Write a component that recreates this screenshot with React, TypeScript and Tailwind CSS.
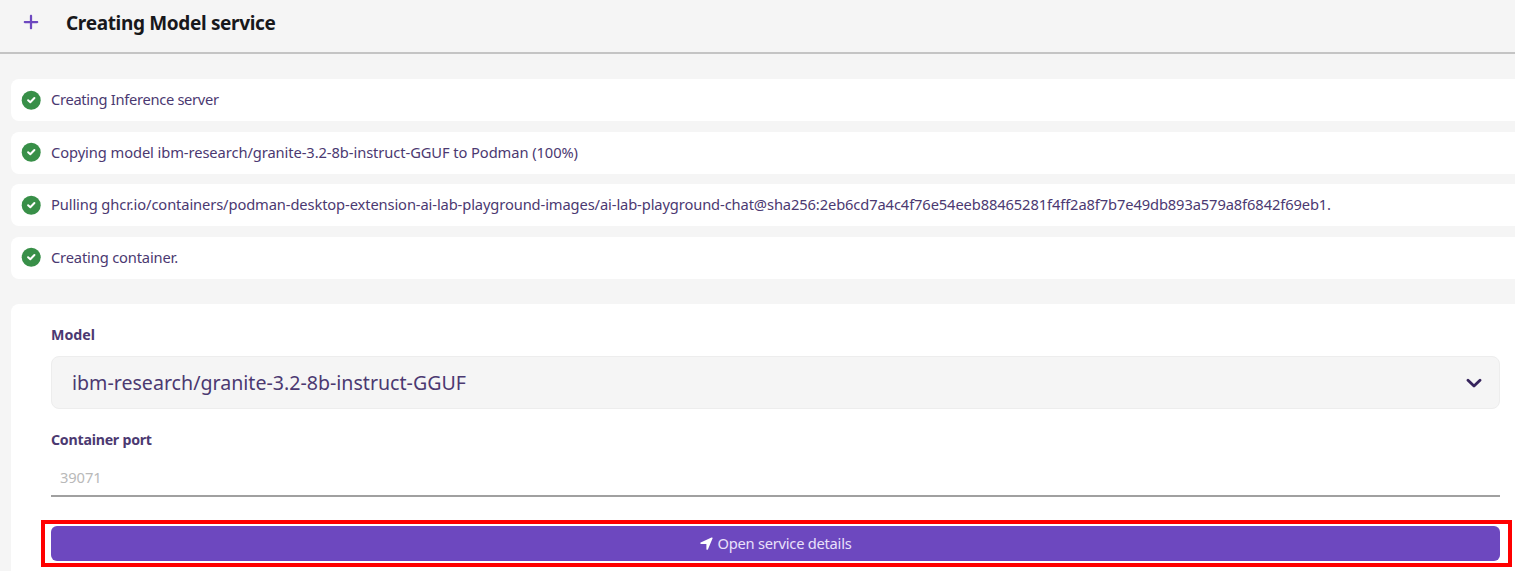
import { FaPlus } from 'react-icons/fa6';

const tasks = [
  { label: 'Creating Inference server', tracking: 'tracking-[-0.31px]' },
  { label: 'Copying model ibm-research/granite-3.2-8b-instruct-GGUF to Podman (100%)', tracking: 'tracking-[-0.08px]' },
  {
    label:
      'Pulling ghcr.io/containers/podman-desktop-extension-ai-lab-playground-images/ai-lab-playground-chat@sha256:2eb6cd7a4c4f76e54eeb88465281f4ff2a8f7b7e49db893a579a8f6842f69eb1.',
    tracking: 'tracking-[-0.112px]',
  },
  { label: 'Creating container.', tracking: 'tracking-[-0.16px]' },
];

function SuccessIcon() {
  return (
    <svg viewBox="0 0 20 20" className="size-5 shrink-0" fill="none">
      <circle cx="10.2" cy="10.2" r="9.5" fill="#388f48" />
      <path d="M7.1 10.2 9.3 12.2 13.4 8" stroke="white" strokeWidth="2" strokeLinecap="round" strokeLinejoin="round" />
    </svg>
  );
}

function Chevron() {
  return (
    <svg viewBox="0 0 16 10" className="h-[10px] w-4 shrink-0" fill="none">
      <path d="M2 2.3 8 8.1 14 2.3" stroke="#36245c" strokeWidth="2.8" strokeLinecap="round" strokeLinejoin="round" />
    </svg>
  );
}

function LocationArrow() {
  return (
    <svg viewBox="0 0 13 13" className="size-[13px] shrink-0" fill="white">
      <path d="M.7 5.4 11.5.6Q13 .2 12.5 1.6L8 12.2Q7.4 13.2 6.4 12.4V6.9H.9Q-.3 6.2.7 5.4Z" />
    </svg>
  );
}

export default function App() {
  return (
    <div className="flex h-[571px] w-full flex-col overflow-hidden bg-[#f5f5f5] font-['Noto_Sans',sans-serif] text-[14.7px] text-[#4b3971]">
      <header className="flex h-[54px] shrink-0 items-center border-b-2 border-[#c4c4c4] pb-[7px] pl-[22px]">
        <FaPlus className="mb-px size-[18px] text-[#6d48bf]" />
        <h1 className="ml-[26px] text-[19px] font-bold leading-7 tracking-[-0.34px] text-[#18181b]">
          Creating Model service
        </h1>
      </header>

      <ul className="mt-[25px] flex shrink-0 flex-col gap-[10.5px] pl-[11px]">
        {tasks.map((task) => (
          <li key={task.label} className="flex h-[42px] items-center rounded-l-lg bg-white pb-px pl-[10px]">
            <SuccessIcon />
            <span className={`ml-[10px] whitespace-nowrap ${task.tracking}`}>{task.label}</span>
          </li>
        ))}
      </ul>

      <main className="ml-[11px] mt-[25.5px] flex grow flex-col rounded-tl-lg bg-white pl-10 pr-[15px] pt-5">
        <label className="text-[14.2px] font-bold leading-[21px]">Model</label>
        <div className="mt-[11px] flex h-[53px] shrink-0 items-center justify-between rounded-lg border border-[#ededed] bg-[#f5f5f5] pl-5 pr-[17px] text-[19.6px]">
          <span>ibm-research/granite-3.2-8b-instruct-GGUF</span>
          <Chevron />
        </div>
        <label className="mt-5 text-[14.2px] font-bold leading-[21px] tracking-[-0.24px]">Container port</label>
        <input
          className="mt-[10px] h-[37px] shrink-0 border-b-2 border-[#a0a0a0] bg-transparent px-[9px] pb-px tracking-[-0.1px] outline-none placeholder:text-[#b9b9b9]"
          placeholder="39071"
        />
        <div className="-ml-[10px] -mr-[12px] mt-[23px] h-[47px] shrink-0 border-4 border-[#ff0000] px-[6px] pt-[2px]">
          <button className="flex h-[35px] w-[1449px] items-center justify-center gap-[5px] rounded-md bg-[#6d48bf] text-[#e9e0fa]">
            <LocationArrow />
            <span className="tracking-[-0.25px]">Open service details</span>
          </button>
        </div>
      </main>
    </div>
  );
}
